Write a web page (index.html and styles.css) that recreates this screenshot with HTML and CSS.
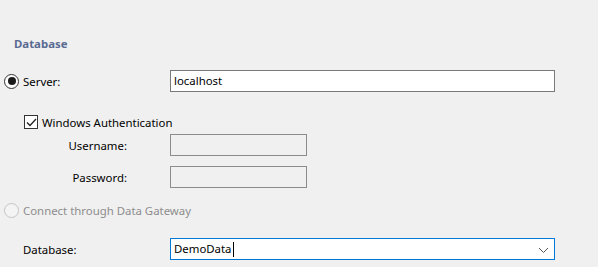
FILE: index.html
```html
<!DOCTYPE html>
<html lang="en">
<head>
    <meta charset="UTF-8">
    <title>Database</title>
<link rel="stylesheet" href="styles.css">
</head>
<body>
    <div class="panel">
        <h3 class="title">Database</h3>
        <div class="row server">
            <label class="opt"><span class="radio on"></span>Server:</label>
            <div class="field wide">localhost</div>
        </div>
        <div class="row check">
            <label class="opt"><span class="box"><svg width="11" height="9" viewBox="0 0 11 9"><path d="M1 4.5 L4 7.5 L10 1" fill="none" stroke="#222" stroke-width="1.3"/></svg></span>Windows Authentication</label>
        </div>
        <div class="row sub">
            <span class="lbl">Username:</span>
            <div class="field short off"></div>
        </div>
        <div class="row sub">
            <span class="lbl">Password:</span>
            <div class="field short off"></div>
        </div>
        <div class="row gw">
            <label class="opt dim"><span class="radio"></span>Connect through Data Gateway</label>
        </div>
        <div class="row db">
            <span class="lbl2">Database:</span>
            <div class="field wide focus">DemoData<span class="caret"></span>
                <svg class="chev" width="11" height="7" viewBox="0 0 11 7"><path d="M1 1 L5.5 5.5 L10 1" fill="none" stroke="#555" stroke-width="1"/></svg>
            </div>
        </div>
    </div>
</body>
</html>
```

FILE: styles.css
```css
*{
    margin:0;
    padding:0;
    box-sizing:border-box;
}
body{
    background:#f0f0f0;
    font-family:"Noto Sans","Liberation Sans",sans-serif;
    font-size:11.4px;
    color:#000;
    width:598px;
    height:267px;
    overflow:hidden;
}
.panel{
    padding:0 43px 0 4px;
}
.title{
    font-size:11.4px;
    font-weight:bold;
    color:#5a6b92;
    margin:35px 0 0 10px;
    height:17px;
    line-height:17px;
}
.row{
    display:flex;
    align-items:center;
    height:22px;
}
.server{
    margin-top:18px;
}
.opt{
    display:flex;
    align-items:center;
    width:166px;
    white-space:nowrap;
}
.radio{
    flex-shrink:0;
    width:15px;
    height:15px;
    border:1px solid #333;
    border-radius:50%;
    background:#fff;
    margin-right:4px;
    position:relative;
}
.radio.on::after{
    content:"";
    position:absolute;
    left:2.5px;
    top:2.5px;
    width:8px;
    height:8px;
    border-radius:50%;
    background:#1a1a1a;
}
.field{
    height:22px;
    border:1px solid #7a7a7a;
    background:#fff;
    padding-left:3px;
    line-height:20px;
}
.wide{
    flex:1;
}
.check{
    margin-top:19px;
    padding-left:20px;
}
.box{
    flex-shrink:0;
    width:14px;
    height:14px;
    border:1px solid #333;
    background:#fff;
    margin-right:4px;
    display:flex;
    align-items:center;
    justify-content:center;
}
.sub{
    margin-top:1px;
}
.sub + .sub{
    margin-top:10px;
}
.lbl{
    width:123px;
    text-align:right;
    margin-right:43px;
}
.short{
    width:137px;
}
.off{
    background:#f0f0f0;
    border-color:#8c8c8c;
}
.gw{
    margin-top:11px;
}
.dim{
    color:#8d8d8d;
}
.dim .radio{
    border-color:#c4c4c4;
    background:#f4f4f4;
}
.db{
    margin-top:17px;
}
.lbl2{
    width:166px;
    padding-left:19px;
}
.focus{
    border-color:#0078d7;
    position:relative;
}
.caret{
    display:inline-block;
    width:1px;
    height:15px;
    background:#000;
    vertical-align:middle;
    margin-left:1px;
}
.chev{
    position:absolute;
    right:5px;
    top:8px;
}
```
